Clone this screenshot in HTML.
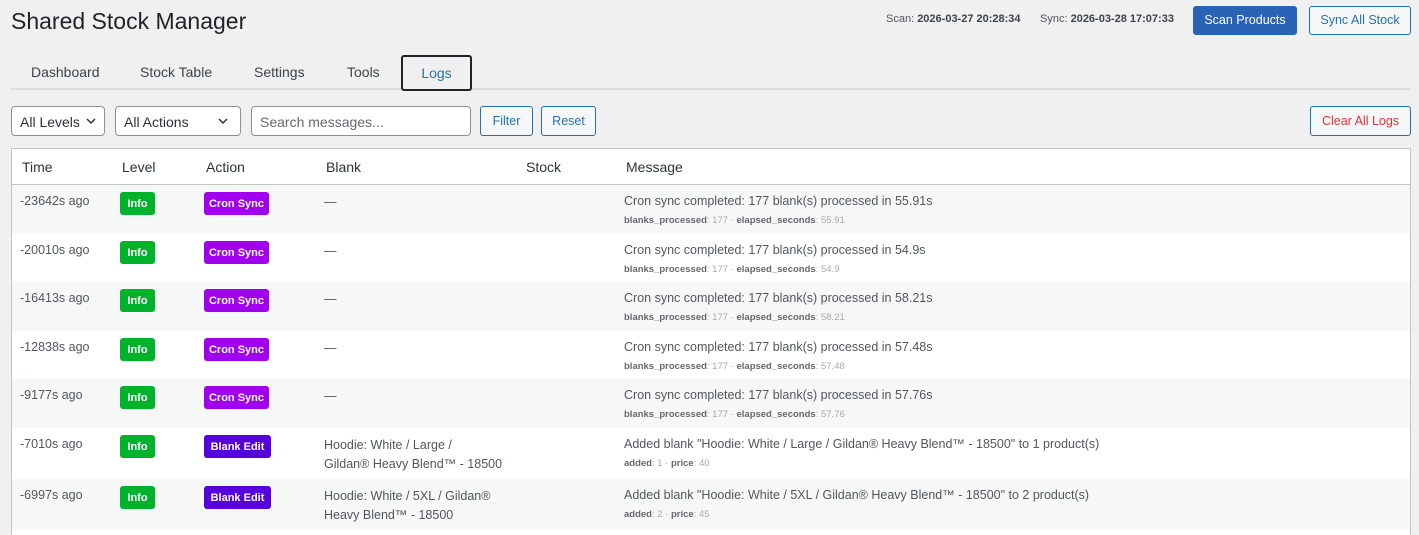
<!DOCTYPE html>
<html><head><meta charset="utf-8"><style>
*{box-sizing:border-box;margin:0;padding:0}
html,body{width:1419px;height:535px;overflow:hidden}
body{background:#f0f0f1;font-family:"Liberation Sans",sans-serif;color:#3c434a;position:relative;font-size:13px}
h1{position:absolute;left:11px;top:8px;font-size:23px;font-weight:400;color:#1d2327}
.meta{position:absolute;top:13px;font-size:11px;color:#50575e}
.meta b{color:#3c434a}
.btn{position:absolute;border:1px solid #2271b1;border-radius:3px;color:#2271b1;background:#f6f7f7;font-size:12.5px;text-align:center}
.tab{position:absolute;top:64px;font-size:14px;color:#3c434a}
.sel{position:absolute;top:106px;height:30px;border:1px solid #8c8f94;border-radius:4px;background:#fff;font-size:14px;padding:7px 8px;color:#2c3338}
.sel svg{position:absolute;right:8px;top:11px}
.table{position:absolute;left:11px;top:148px;width:1400px;height:387px;background:#fff;border:1px solid #c3c4c7;border-bottom:none}
.hd{position:absolute;top:10px;font-size:14px;color:#2c3338}
.row{position:absolute;left:0;width:1398px;height:49px}
.row.alt{background:#f6f7f7}
.t{position:absolute;left:8px;top:9px;font-size:12.5px;color:#50575e}
.badge{position:absolute;top:7px;height:23px;border-radius:3px;color:#fff;font-weight:700;font-size:11px;text-align:center;line-height:24px}
.info{left:108px;width:35px;background:#00b32a}
.cron{left:192px;width:65px;background:#a100ef}
.bedit{left:192px;width:67px;background:#5600dc}
.bl{position:absolute;left:312px;top:8px;font-size:12.5px;line-height:19px;color:#50575e}
.msg{position:absolute;left:612px;top:9px;font-size:12.5px;color:#50575e}
.sub{position:absolute;left:612px;top:30px;font-size:9.5px;color:#a7aaad}
.sub b{color:#646970}
</style></head><body>
<h1>Shared Stock Manager</h1>
<div class="meta" style="left:886px">Scan: <b>2026-03-27 20:28:34</b></div>
<div class="meta" style="left:1040px">Sync: <b>2026-03-28 17:07:33</b></div>
<div class="btn" style="left:1193px;top:6px;width:104px;height:29px;line-height:27px;background:#2a62b5;border-color:#2a62b5;color:#fff">Scan Products</div>
<div class="btn" style="left:1309px;top:6px;width:102px;height:29px;line-height:27px">Sync All Stock</div>
<div class="tab" style="left:31px">Dashboard</div>
<div class="tab" style="left:140px">Stock Table</div>
<div class="tab" style="left:254px">Settings</div>
<div class="tab" style="left:347px">Tools</div>
<div style="position:absolute;left:11px;top:88px;width:1400px;height:2px;background:#dcdcde"></div>
<div style="position:absolute;left:401px;top:55px;width:71px;height:36px;border:2px solid #1d2327;border-radius:3px;background:#f0f0f1;color:#2271b1;font-size:14px;text-align:center;line-height:32px">Logs</div>
<div class="sel" style="left:11px;width:94px">All Levels<svg width="10" height="7" viewBox="0 0 10 7"><path d="M1 1l4 4 4-4" fill="none" stroke="#2c3338" stroke-width="1.5"/></svg></div>
<div class="sel" style="left:115px;width:126px">All Actions<svg width="10" height="7" viewBox="0 0 10 7" style="right:12px"><path d="M1 1l4 4 4-4" fill="none" stroke="#2c3338" stroke-width="1.5"/></svg></div>
<div class="sel" style="left:251px;width:220px;color:#646970">Search messages...</div>
<div class="btn" style="left:480px;top:106px;width:53px;height:30px;line-height:28px">Filter</div>
<div class="btn" style="left:541px;top:106px;width:55px;height:30px;line-height:28px">Reset</div>
<div class="btn" style="left:1310px;top:106px;width:101px;height:30px;line-height:28px;color:#d63638">Clear All Logs</div>
<div class="table">
<div class="hd" style="left:10px">Time</div><div class="hd" style="left:110px">Level</div><div class="hd" style="left:194px">Action</div><div class="hd" style="left:314px">Blank</div><div class="hd" style="left:514px">Stock</div><div class="hd" style="left:614px">Message</div>
<div style="position:absolute;left:0;top:35px;width:1398px;height:1px;background:#c3c4c7"></div>

<div class="row alt" style="top:36px"><div class="t">-23642s ago</div><div class="badge info">Info</div><div class="badge cron">Cron Sync</div><div class="bl">—</div><div class="msg">Cron sync completed: 177 blank(s) processed in 55.91s</div><div class="sub"><b>blanks_processed</b>: 177 &middot; <b>elapsed_seconds</b>: 55.91</div></div>
<div class="row" style="top:85px"><div class="t">-20010s ago</div><div class="badge info">Info</div><div class="badge cron">Cron Sync</div><div class="bl">—</div><div class="msg">Cron sync completed: 177 blank(s) processed in 54.9s</div><div class="sub"><b>blanks_processed</b>: 177 &middot; <b>elapsed_seconds</b>: 54.9</div></div>
<div class="row alt" style="top:133px"><div class="t">-16413s ago</div><div class="badge info">Info</div><div class="badge cron">Cron Sync</div><div class="bl">—</div><div class="msg">Cron sync completed: 177 blank(s) processed in 58.21s</div><div class="sub"><b>blanks_processed</b>: 177 &middot; <b>elapsed_seconds</b>: 58.21</div></div>
<div class="row" style="top:182px"><div class="t">-12838s ago</div><div class="badge info">Info</div><div class="badge cron">Cron Sync</div><div class="bl">—</div><div class="msg">Cron sync completed: 177 blank(s) processed in 57.48s</div><div class="sub"><b>blanks_processed</b>: 177 &middot; <b>elapsed_seconds</b>: 57.48</div></div>
<div class="row alt" style="top:230px"><div class="t">-9177s ago</div><div class="badge info">Info</div><div class="badge cron">Cron Sync</div><div class="bl">—</div><div class="msg">Cron sync completed: 177 blank(s) processed in 57.76s</div><div class="sub"><b>blanks_processed</b>: 177 &middot; <b>elapsed_seconds</b>: 57.76</div></div>
<div class="row" style="top:279px;height:51px"><div class="t">-7010s ago</div><div class="badge info">Info</div><div class="badge bedit">Blank Edit</div><div class="bl">Hoodie: White / Large /<br>Gildan® Heavy Blend™ - 18500</div><div class="msg">Added blank "Hoodie: White / Large / Gildan® Heavy Blend™ - 18500" to 1 product(s)</div><div class="sub"><b>added</b>: 1 &middot; <b>price</b>: 40</div></div>
<div class="row alt" style="top:330px;height:51px"><div class="t">-6997s ago</div><div class="badge info">Info</div><div class="badge bedit">Blank Edit</div><div class="bl">Hoodie: White / 5XL / Gildan®<br>Heavy Blend™ - 18500</div><div class="msg">Added blank "Hoodie: White / 5XL / Gildan® Heavy Blend™ - 18500" to 2 product(s)</div><div class="sub"><b>added</b>: 2 &middot; <b>price</b>: 45</div></div>
</div>
</body></html>
